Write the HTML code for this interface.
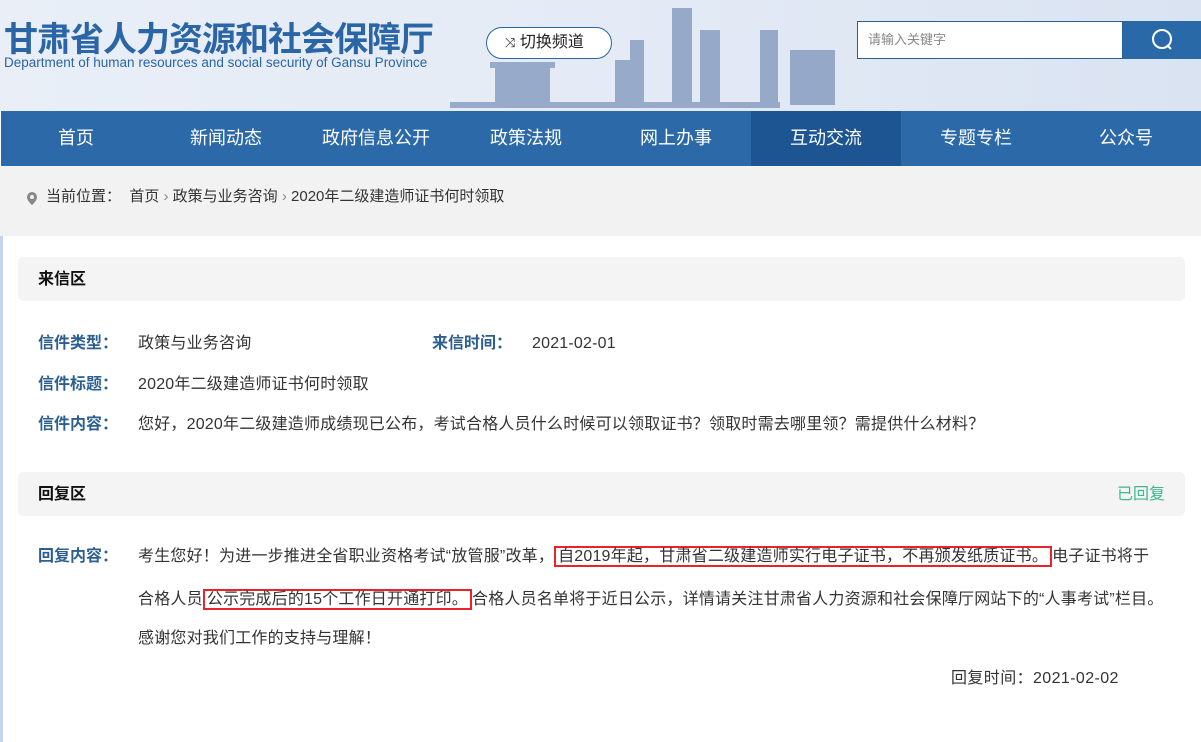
<!DOCTYPE html>
<html><head><meta charset="utf-8"><style>
*{margin:0;padding:0;box-sizing:border-box}
body{width:1201px;height:742px;overflow:hidden;background:#fff;font-family:"Liberation Sans","Noto Sans CJK SC",sans-serif;color:#333;position:relative}
.hd{position:absolute;left:0;top:0;width:1201px;height:111px;background:linear-gradient(90deg,#e9eef7,#e4ebf6 50%,#dae3f2)}
.t1{position:absolute;left:4px;top:12px;font-size:34px;font-weight:bold;color:#2a65a6;letter-spacing:-1px;white-space:nowrap}
.t2{position:absolute;left:4px;top:55px;font-size:13.5px;color:#2a65a6;white-space:nowrap}
.sw{position:absolute;left:486px;top:27px;width:126px;height:32px;border:1px solid #2a65a6;border-radius:16px;background:#fff;font-size:16px;color:#222;line-height:30px;padding-left:18px}
.city{position:absolute;left:450px;top:0;width:410px;height:111px}
.srch{position:absolute;left:857px;top:21px;width:266px;height:38px;border:1px solid #2a5f96;background:#fff;font-size:13px;color:#888;line-height:36px;padding-left:10px}
.sbtn{position:absolute;left:1123px;top:21px;width:78px;height:38px;background:#2a69a8}
.nav{position:absolute;left:1px;top:111px;width:1200px;height:55px;background:#2b69a8;display:flex}
.nav div{width:150px;text-align:center;color:#fff;font-size:18px;line-height:55px}
.nav .on{background:#1c5592}
.bc{position:absolute;left:0;top:166px;width:1201px;height:70px;background:#f2f2f2;font-size:15px;color:#333;line-height:62px;padding-left:46px;white-space:nowrap}
.lb{position:absolute;left:0;top:236px;width:3px;height:506px;background:#c4d3ee}
.bar{position:absolute;left:18px;width:1167px;height:44px;background:#f4f4f4;border-radius:5px;font-size:16px;font-weight:bold;color:#111;line-height:46px;padding-left:20px}
.k,.v{position:absolute;font-size:16px;line-height:20px;white-space:nowrap}
.k{left:38px;font-weight:bold;color:#2c5f8f}
.v{color:#333;letter-spacing:0.2px}
.rb{border:2px solid #e8232b;padding:0 2px}
</style></head><body>
<div class="hd"></div>
<div class="t1">甘肃省人力资源和社会保障厅</div>
<div class="t2">Department of human resources and social security of Gansu Province</div>
<svg class="city" viewBox="0 0 410 111">
<g fill="#3d5c94" opacity=".45">
<rect x="45" y="68" width="55" height="35"/><rect x="40" y="62" width="65" height="6"/>
<rect x="165" y="60" width="22" height="45"/><rect x="180" y="40" width="14" height="65"/>
<rect x="222" y="8" width="20" height="97"/><rect x="250" y="30" width="20" height="75"/>
<rect x="310" y="30" width="18" height="75"/><rect x="340" y="50" width="45" height="55"/>
<rect x="0" y="102" width="330" height="6"/>
</g></svg>
<div class="sw"><span style="font-size:13px">⤨</span> 切换频道</div>
<div class="srch">请输入关键字</div>
<div class="sbtn"><svg width="78" height="38"><circle cx="39" cy="18" r="9" fill="none" stroke="#fff" stroke-width="2"/><path d="M44 24l4 4" stroke="#fff" stroke-width="2"/></svg></div>
<div class="nav"><div>首页</div><div>新闻动态</div><div>政府信息公开</div><div>政策法规</div><div>网上办事</div><div class="on">互动交流</div><div>专题专栏</div><div>公众号</div></div>
<div class="bc"><svg style="position:absolute;left:26px;top:25px" width="12" height="14"><path d="M6 1a5 5 0 0 0-5 5c0 4 5 8 5 8s5-4 5-8a5 5 0 0 0-5-5z" fill="#888"/><circle cx="6" cy="6" r="2" fill="#f2f2f2"/></svg>当前位置：&nbsp; 首页 <span style="color:#888">›</span> 政策与业务咨询 <span style="color:#888">›</span> 2020年二级建造师证书何时领取</div>
<div class="lb"></div>
<div class="bar" style="top:257px">来信区</div>
<div class="k" style="top:334px">信件类型：</div><div class="v" style="left:138px;top:334px">政策与业务咨询</div>
<div class="k" style="left:432px;top:334px">来信时间：</div><div class="v" style="left:532px;top:334px">2021-02-01</div>
<div class="k" style="top:375px">信件标题：</div><div class="v" style="left:138px;top:375px">2020年二级建造师证书何时领取</div>
<div class="k" style="top:415px">信件内容：</div><div class="v" style="left:138px;top:415px">您好，2020年二级建造师成绩现已公布，考试合格人员什么时候可以领取证书？领取时需去哪里领？需提供什么材料？</div>
<div class="bar" style="top:472px">回复区<span style="position:absolute;right:20px;font-weight:normal;color:#3dba8c">已回复</span></div>
<div class="k" style="top:547px">回复内容：</div>
<div class="v" style="left:138px;top:547px">考生您好！为进一步推进全省职业资格考试“放管服”改革，<span class="rb">自2019年起，甘肃省二级建造师实行电子证书，不再颁发纸质证书。</span>电子证书将于</div>
<div class="v" style="left:138px;top:590px">合格人员<span class="rb">公示完成后的15个工作日开通打印。</span>合格人员名单将于近日公示，详情请关注甘肃省人力资源和社会保障厅网站下的“人事考试”栏目。</div>
<div class="v" style="left:138px;top:629px">感谢您对我们工作的支持与理解！</div>
<div class="v" style="left:951px;top:669px;letter-spacing:0.4px">回复时间：2021-02-02</div>
</body></html>
